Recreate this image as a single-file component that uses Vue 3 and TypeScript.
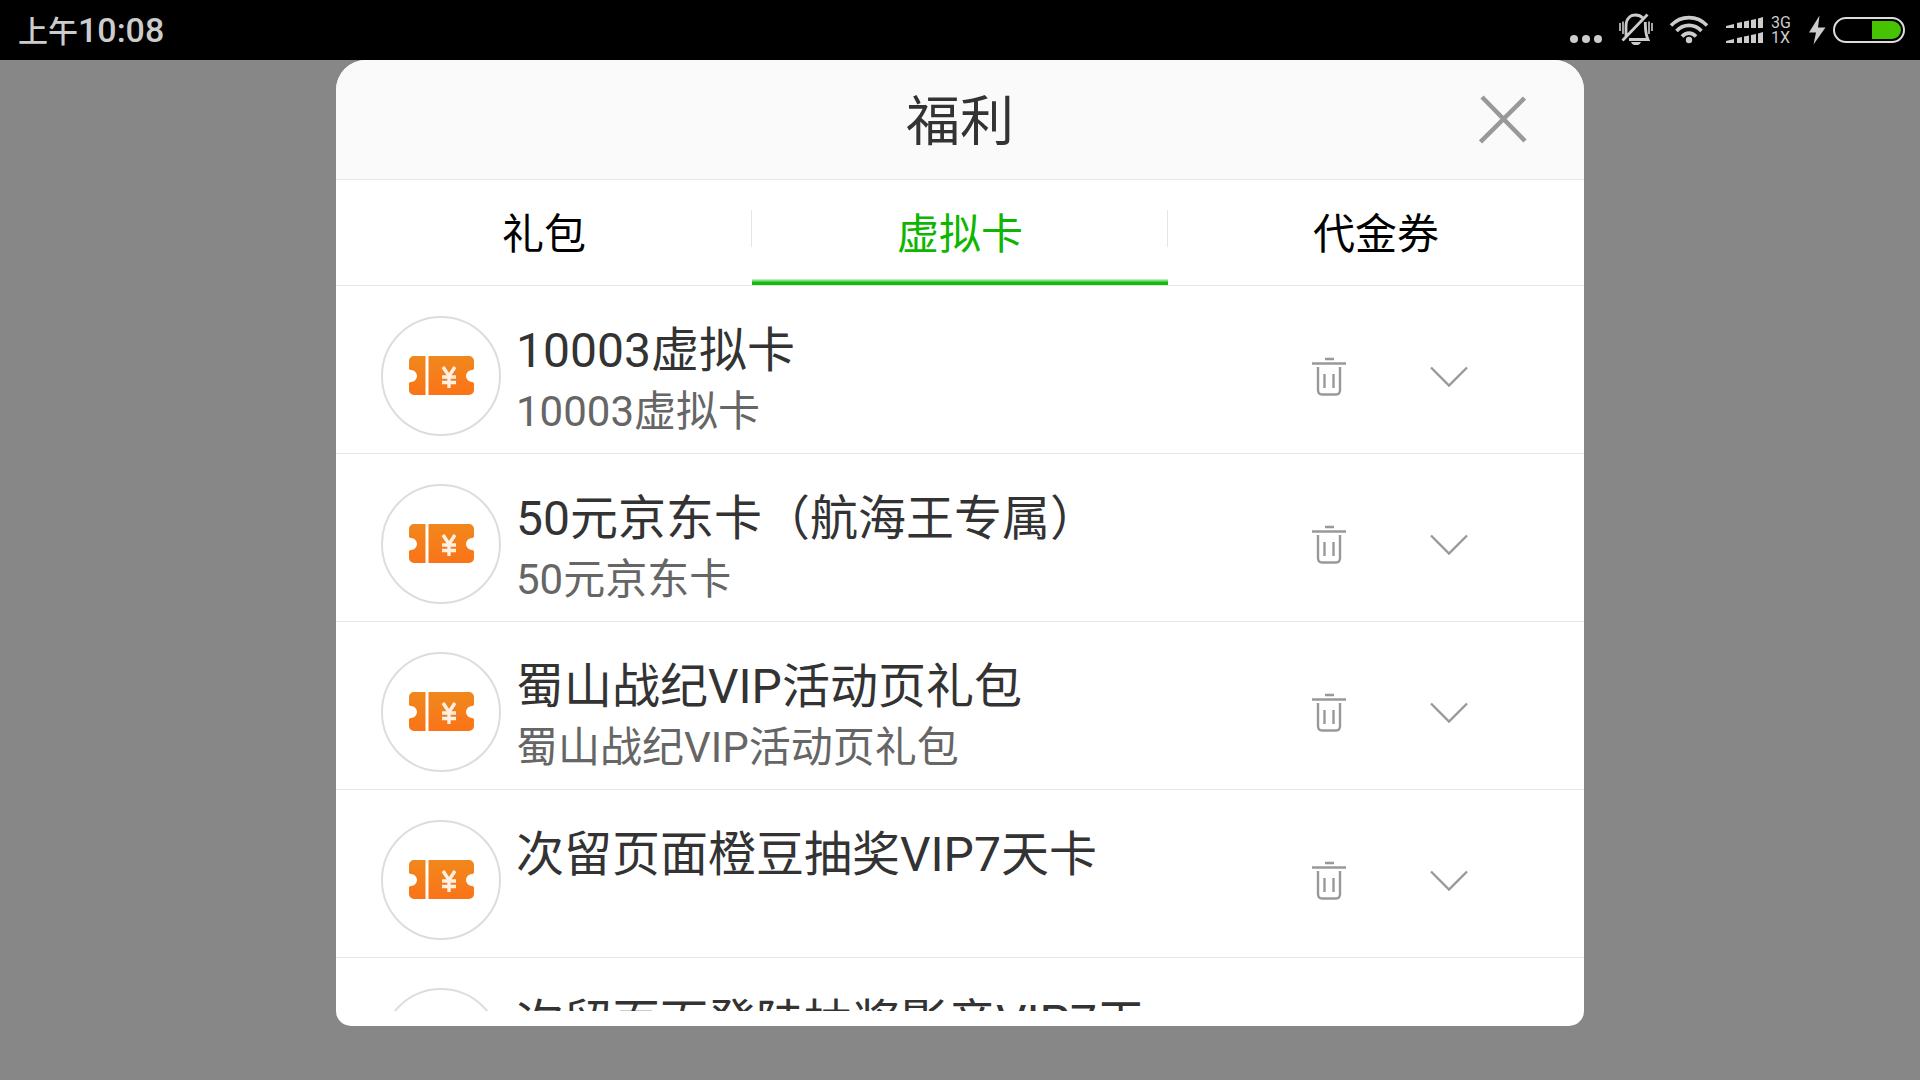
<script setup lang="ts">
import { ref } from 'vue'

interface Tab {
  id: string
  label: string
}

interface Card {
  id: number
  title: string
  detail: string
}

const tabs: Tab[] = [
  { id: 'gift', label: '礼包' },
  { id: 'card', label: '虚拟卡' },
  { id: 'voucher', label: '代金券' },
]

const activeTab = ref('card')

const cards = ref<Card[]>([
  { id: 1, title: '10003虚拟卡', detail: '10003虚拟卡' },
  { id: 2, title: '50元京东卡（航海王专属）', detail: '50元京东卡' },
  { id: 3, title: '蜀山战纪VIP活动页礼包', detail: '蜀山战纪VIP活动页礼包' },
  { id: 4, title: '次留页面橙豆抽奖VIP7天卡', detail: '' },
  { id: 5, title: '次留页面登陆抽奖影音VIP7天', detail: '' },
])

function removeCard(id: number) {
  cards.value = cards.value.filter((card) => card.id !== id)
}
</script>

<template>
  <div class="screen">
    <header class="status">
      <div class="clock"><span class="period">上午</span><span>10:08</span></div>
      <div class="indicators">
        <svg class="dots" width="34" height="44" viewBox="0 0 34 44" fill="#ccc">
          <circle cx="4" cy="33" r="4" />
          <circle cx="16" cy="33" r="4" />
          <circle cx="28" cy="33" r="4" />
        </svg>
        <svg class="bell" width="36" height="44" viewBox="0 0 36 44" fill="none" stroke="#ccc" stroke-width="2.8">
          <path d="M8 30V20C8 13 12 9 17.500 9C20.500 9 23 10 24.800 12M27.300 16C27.500 22 27 27 30 33.500H11M4.500 34.500L29.500 8.500" />
          <path d="M13 36H23C22 38.500 20.500 39 18 39C15.500 39 14 38.500 13 36Z" fill="#ccc" stroke="none" />
          <path d="M2 17V25M5 15.500V28M31 15.500V28M34 17V25" stroke-width="1.600" />
        </svg>
        <svg class="wifi" width="40" height="44" viewBox="0 0 40 44" fill="none" stroke="#ccc" stroke-width="3.600">
          <path d="M2 19.500C12 9 28 9 38 19.500M7.500 25C14.500 17.500 25.500 17.500 32.500 25M13 30.500C17 26 23 26 27 30.500" />
          <circle cx="20" cy="34" r="3.200" fill="#ccc" stroke="none" />
        </svg>
        <svg class="signal" width="38" height="44" viewBox="0 0 38 44" fill="#ccc">
          <path d="M0 20L8 18V22H0ZM11 17L16 16V22H11ZM18 15.500L23 14.500V22H18ZM25 14L30 13V22H25ZM32 12.500L37 11V22H32Z" />
          <path d="M0 35L8 33V37H0ZM11 32L16 31V37H11ZM18 30.500L23 29.500V37H18ZM25 29L30 28V37H25ZM32 27.500L37 26V37H32Z" />
        </svg>
        <div class="network"><span>3G</span><span>1X</span></div>
        <svg class="bolt" width="18" height="44" viewBox="0 0 18 44" fill="#ccc">
          <path d="M11.500 9.500L1 26.500H8L5.500 38.500L17.500 21.500H10Z" />
        </svg>
        <svg class="battery" width="72" height="44" viewBox="0 0 72 44">
          <rect x="1" y="12" width="70" height="24" rx="12" fill="none" stroke="#ddd" stroke-width="2" />
          <path d="M39 15H59A9 9 0 0 1 59 33H39Z" fill="#46c301" />
        </svg>
      </div>
    </header>

    <section class="dialog" role="dialog" aria-labelledby="dialog-title">
      <div class="heading">
        <h1 id="dialog-title">福利</h1>
        <button class="close" type="button" aria-label="关闭">
          <svg width="50" height="50" viewBox="0 0 50 50" stroke="#999" stroke-width="4.5">
            <path d="M3 2L46 46M45.500 3L1.500 47" />
          </svg>
        </button>
      </div>

      <nav class="tabs" role="tablist">
        <button
          v-for="tab in tabs"
          :key="tab.id"
          class="tab"
          :class="{ active: tab.id === activeTab }"
          type="button"
          role="tab"
          :aria-selected="tab.id === activeTab"
          @click="activeTab = tab.id"
        >
          {{ tab.label }}
        </button>
      </nav>

      <ul class="list">
        <li v-for="card in cards" :key="card.id" class="row">
          <div class="badge">
            <svg width="68" height="42" viewBox="-1 0 68 42">
              <defs>
                <linearGradient :id="`ticket-${card.id}`" x1="0" y1="0" x2="0" y2="1">
                  <stop offset="0" stop-color="#f0881c" />
                  <stop offset="1" stop-color="#fb7318" />
                </linearGradient>
              </defs>
              <path
                :fill="`url(#ticket-${card.id})`"
                d="M6 1H61A5 5 0 0 1 66 6V14Q65 15 64 15A6 6 0 0 0 64 27Q65 27 66 28V35A5 5 0 0 1 61 40H6A5 5 0 0 1 1 35V28Q2 27 3 27A6 6 0 0 0 3 15Q2 15 1 14V6A5 5 0 0 1 6 1Z"
              />
              <path d="M19 0V42" stroke="#fff" stroke-width="3" />
              <path d="M35 12L41 21L47 12M34 22H48M34 27.500H48M41 21V33" fill="none" stroke="#fff0e4" stroke-width="3.400" />
            </svg>
          </div>
          <div class="text">
            <h2>{{ card.title }}</h2>
            <p v-if="card.detail">{{ card.detail }}</p>
          </div>
          <button class="action" type="button" aria-label="删除" @click="removeCard(card.id)">
            <svg width="36" height="40" viewBox="0 0 36 40" fill="none" stroke="#999" stroke-width="2.4">
              <path d="M14 2H23M1 6.500H35M7 10V33Q7 37.500 11 37.500H25Q29 37.500 29 33V10M13.500 17V31M22.500 17V31" />
            </svg>
          </button>
          <button class="action" type="button" aria-label="展开">
            <svg width="40" height="22" viewBox="0 0 40 22" fill="none" stroke="#999" stroke-width="2.4">
              <path d="M2 1.500L20 19.500L38 1.500" />
            </svg>
          </button>
        </li>
      </ul>
    </section>
  </div>
</template>

<style>
body {
  margin: 0;
  background: #878787;
}
</style>

<style scoped>
.screen {
  display: flex;
  flex-direction: column;
  height: 100vh;
  background: #878787;
  font-family: Roboto, "Noto Sans CJK SC", sans-serif;
  color: #333;
}

button {
  padding: 0;
  border: 0;
  background: none;
  font: inherit;
  color: inherit;
}

svg {
  display: block;
}

.status {
  display: flex;
  flex: none;
  justify-content: space-between;
  height: 60px;
  padding: 0 15px 0 18px;
  background: #000;
  color: #ccc;
}

.clock {
  font-size: 34px;
  font-weight: 500;
  line-height: 60px;
}

.period {
  font-size: 30px;
}

.indicators {
  display: flex;
  align-items: center;
  height: 50px;
  padding-top: 3px;
}

.bell {
  margin-left: 14px;
}

.wifi {
  margin-left: 15px;
}

.signal {
  margin-left: 17px;
}

.network {
  display: flex;
  flex-direction: column;
  width: 22px;
  margin-left: 7px;
  padding-top: 4px;
  font-size: 16px;
  line-height: 15px;
}

.bolt {
  margin-left: 15px;
}

.battery {
  margin-left: 7px;
}

.dialog {
  display: flex;
  flex: 1;
  flex-direction: column;
  box-sizing: border-box;
  width: 65%;
  min-height: 0;
  margin: 0 auto 54px;
  padding-bottom: 15px;
  border-radius: 30px 30px 15px 15px;
  background: #fff;
  overflow: hidden;
}

.heading {
  display: grid;
  flex: none;
  grid-template-columns: 160px 1fr 160px;
  align-items: center;
  height: 119px;
  border-bottom: 1px solid #e5e5e5;
  background: #fafafa;
}

h1 {
  grid-column: 2;
  margin: 0;
  padding-top: 6px;
  font-size: 54px;
  font-weight: 400;
  line-height: 60px;
  text-align: center;
}

.close {
  display: flex;
  align-items: center;
  justify-content: center;
  height: 100%;
}

.tabs {
  display: flex;
  flex: none;
  height: 105px;
  border-bottom: 1px solid #e5e5e5;
}

.tab {
  position: relative;
  flex: 1;
  padding-top: 4px;
  color: #000;
  font-size: 42px;
  line-height: 60px;
}

.tab:not(:last-child)::after {
  content: "";
  position: absolute;
  top: 30px;
  right: 0;
  width: 1px;
  height: 37px;
  background: #e5e5e5;
}

.tab.active {
  color: #0eb600;
}

.tab.active::before {
  content: "";
  position: absolute;
  right: 0;
  bottom: 0;
  left: 0;
  height: 6px;
  background: linear-gradient(#d8f5d6, #10bb0b 60%);
}

.list {
  flex: 1;
  min-height: 0;
  margin: 0;
  padding: 0;
  list-style: none;
  overflow: hidden;
}

.row {
  display: flex;
  box-sizing: border-box;
  height: 168px;
  padding: 0 75px 0 45px;
  border-bottom: 1px solid #e5e5e5;
}

.badge {
  display: flex;
  flex: none;
  align-items: center;
  justify-content: center;
  box-sizing: border-box;
  width: 120px;
  height: 120px;
  margin-top: 30px;
  border: 2px solid #ddd;
  border-radius: 50%;
}

.text {
  flex: 1;
  min-width: 0;
  padding: 35px 0 0 15px;
  white-space: nowrap;
}

h2,
p {
  margin: 0;
  font-weight: 400;
}

h2 {
  font-size: 48px;
  line-height: 60px;
}

p {
  color: #666;
  font-size: 42px;
  line-height: 62px;
}

.action {
  display: flex;
  flex: none;
  align-items: center;
  justify-content: center;
  width: 120px;
  height: 120px;
  margin-top: 31px;
}
</style>
